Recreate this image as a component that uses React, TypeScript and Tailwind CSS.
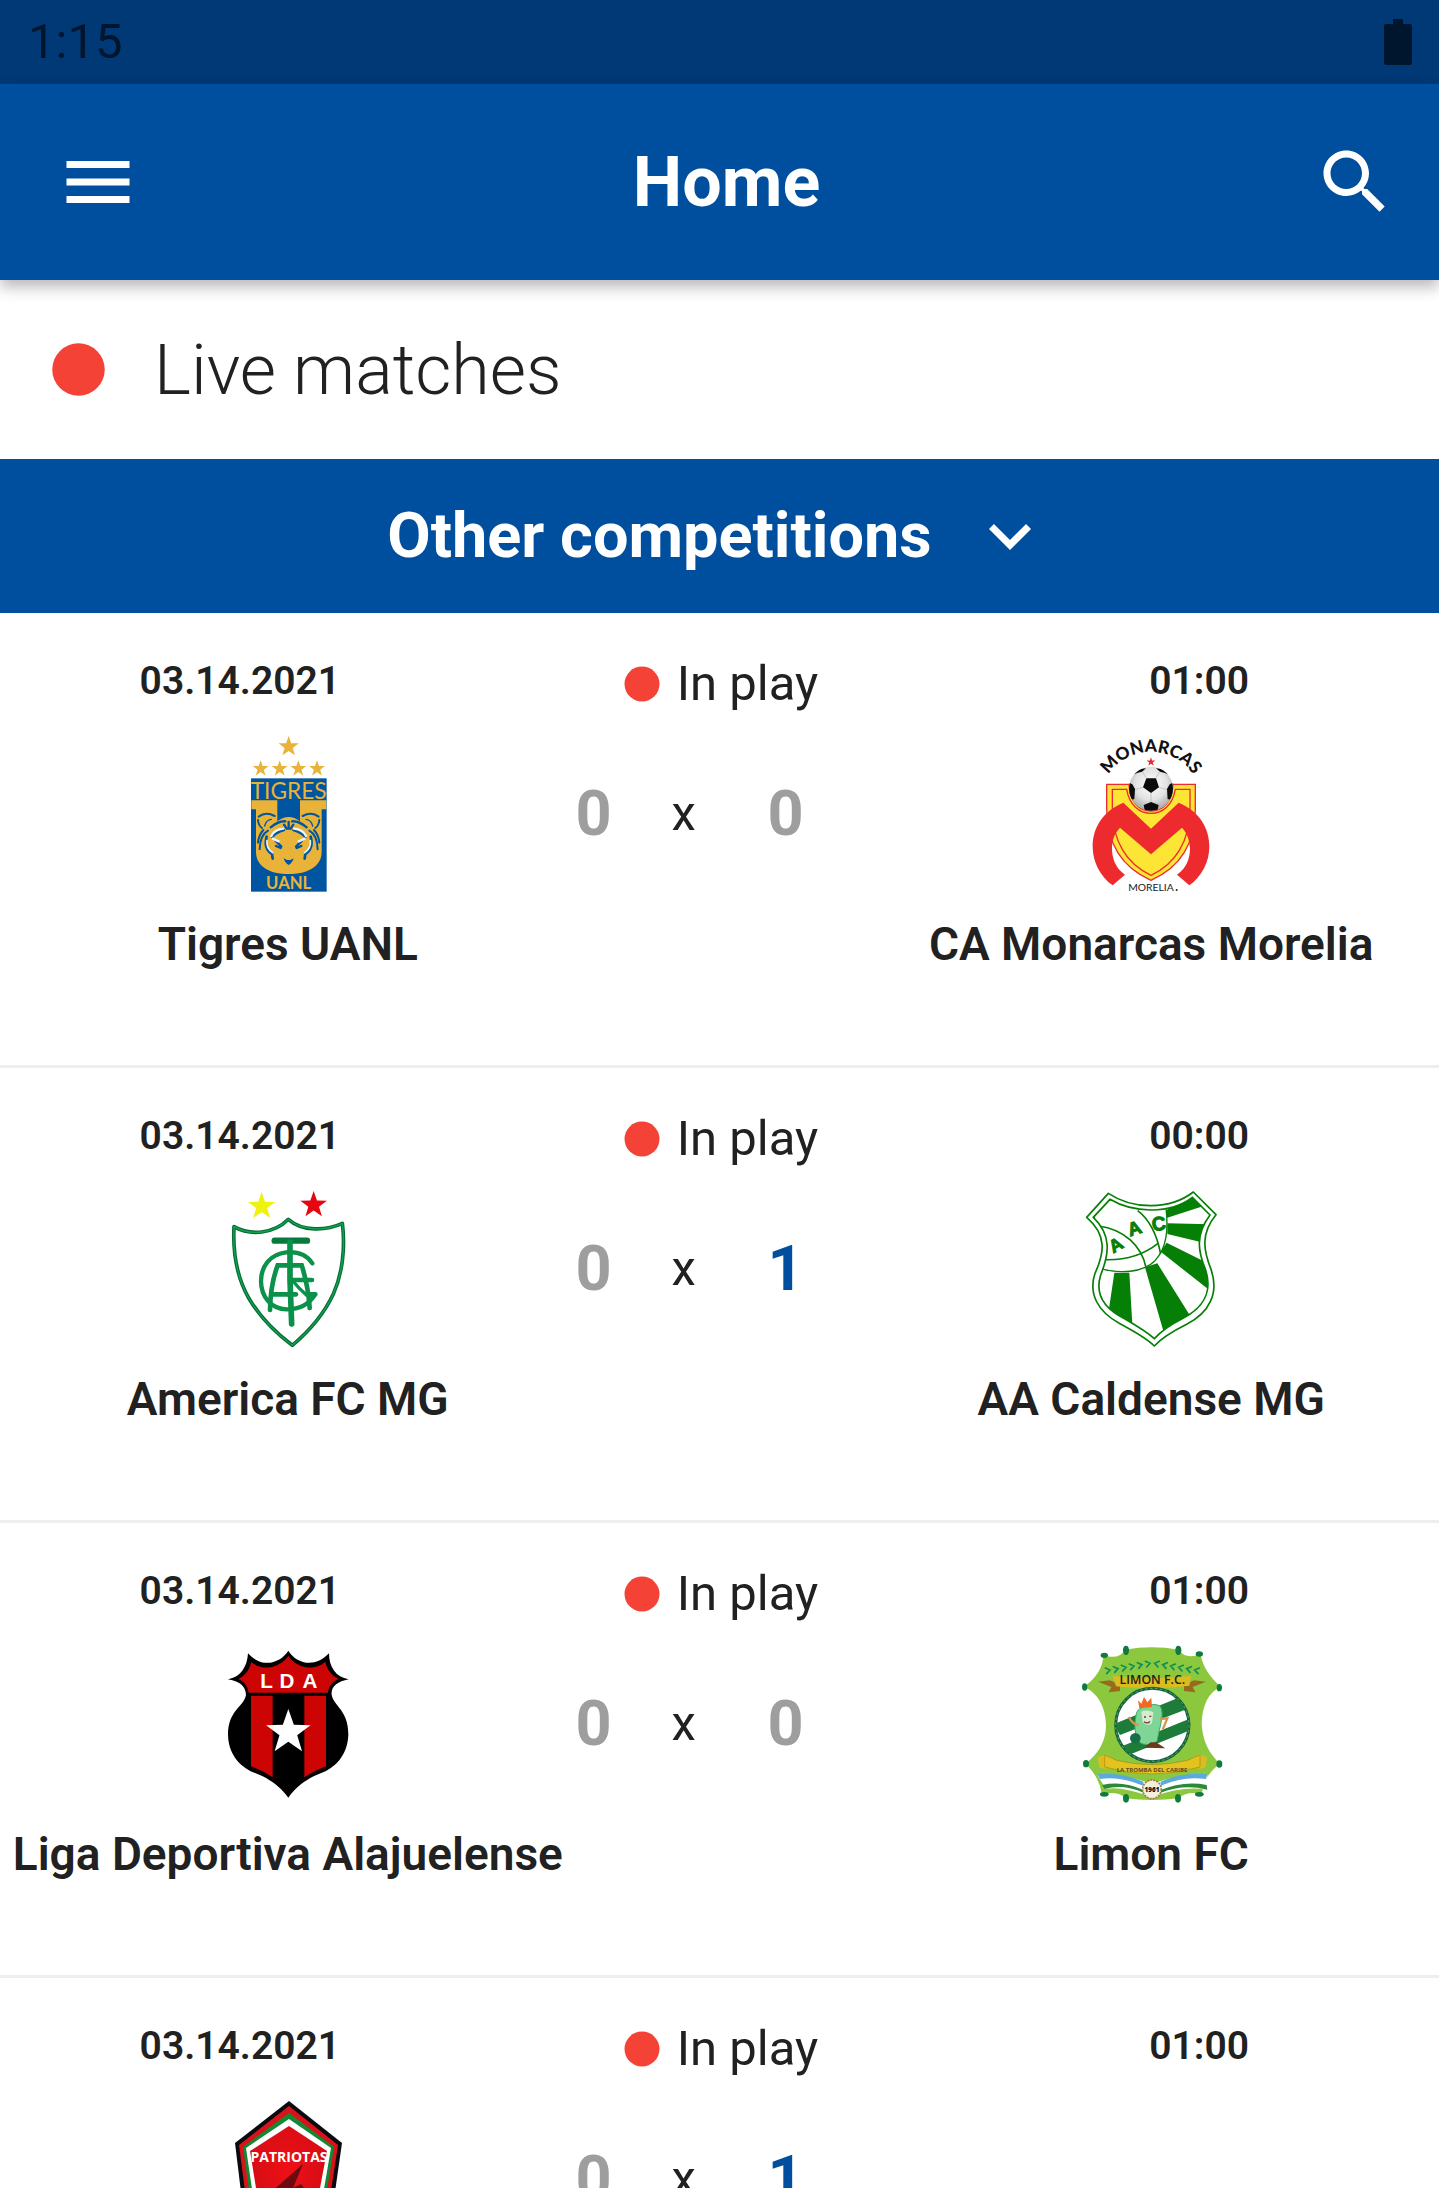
import type { ReactNode } from "react";

function starPoints(cx: number, cy: number, r: number) {
  const pts: string[] = [];
  for (let i = 0; i < 10; i++) {
    const radius = i % 2 === 0 ? r : r * 0.4;
    const a = (Math.PI / 5) * i - Math.PI / 2;
    pts.push(`${(cx + radius * Math.cos(a)).toFixed(1)},${(cy + radius * Math.sin(a)).toFixed(1)}`);
  }
  return pts.join(" ");
}

function Star({ cx, cy, r, fill }: { cx: number; cy: number; r: number; fill: string }) {
  return <polygon points={starPoints(cx, cy, r)} fill={fill} />;
}

function Crest({ viewBox, label, children }: { viewBox: string; label: string; children: ReactNode }) {
  return (
    <svg viewBox={viewBox} role="img" aria-label={label} className="size-full">
      {children}
    </svg>
  );
}

function TigresCrest() {
  const blue = "#0055a0";
  const gold = "#e8b338";
  return (
    <Crest viewBox="-65 45 474 474" label="Tigres UANL crest">
      <Star cx={174} cy={80} r={32} fill={gold} />
      {[90, 147, 203, 259].map((x) => (
        <Star key={x} cx={x} cy={146} r={25} fill={gold} />
      ))}
      <rect x="61" y="175" width="227" height="340" fill={blue} />
      <text x="174" y="236" textAnchor="middle" fontFamily="Lato, sans-serif" fontSize="68" fill={gold}>
        TIGRES
      </text>
      <path
        d="M62 241H140V304Q174 278 208 304V241H287V268H273V395C273 440 230 462 174 462S76 440 76 395V268H62Z"
        fill={gold}
      />
      <g fill="none" stroke={blue} strokeLinecap="round">
        <path d="M84 290Q105 274 132 288M82 300Q84 318 94 324M264 290Q243 274 216 288M266 300Q264 318 254 324" strokeWidth="6" />
        <path d="M122 298Q106 300 102 318M226 298Q242 300 246 318" strokeWidth="4" />
        <path d="M120 322Q145 302 164 304M228 322Q203 302 184 304M174 306V326M160 314L168 326M188 314L180 326" strokeWidth="7" />
        <path d="M112 332Q88 345 87 388M98 330Q84 345 82 368M236 332Q260 345 261 388M250 330Q264 345 266 368" strokeWidth="6" />
        <path d="M108 350Q98 385 124 402L126 416M240 350Q250 385 224 402L222 416" strokeWidth="8" />
        <path d="M124 352Q136 336 160 330M134 362L152 380M136 378L150 384M224 352Q212 336 188 330M214 362L196 380M212 378L198 384" strokeWidth="7" />
      </g>
      <g fill="none" stroke="#e8f4ff" strokeLinecap="round" strokeWidth="7">
        <path d="M122 348Q132 328 158 326M126 356L144 364M226 348Q216 328 190 326M222 356L204 364" />
        <path d="M109 362Q106 384 126 398M239 362Q242 384 222 398" strokeWidth="5" />
      </g>
      <path d="M159 415L169 420H179L189 415Q186 428 174 435Q162 428 159 415Z" fill={blue} />
      <text x="174" y="507" textAnchor="middle" fontFamily="Lato, sans-serif" fontWeight="700" fontSize="50" fill={gold}>
        UANL
      </text>
    </Crest>
  );
}

function MonarcasCrest() {
  const red = "#ed2a2e";
  return (
    <Crest viewBox="-24 30 474 474" label="CA Monarcas Morelia crest">
      <defs>
        <radialGradient id="ball" cx="0.5" cy="0.4" r="0.6">
          <stop offset="0" stopColor="#ffffff" />
          <stop offset="0.6" stopColor="#e2e2e2" />
          <stop offset="1" stopColor="#a8a8a8" />
        </radialGradient>
        <clipPath id="ballClip">
          <circle cx="213" cy="191" r="66" />
        </clipPath>
        <path id="arc" d="M62 250A152 152 0 1 1 364 250" />
      </defs>
      <text fontFamily="Lato, sans-serif" fontWeight="900" fontSize="52" fill="#111">
        <textPath href="#arc" startOffset="50%" textAnchor="middle">
          MONARCAS
        </textPath>
      </text>
      <Star cx={213} cy={111} r={14} fill={red} />
      <g stroke={red} strokeWidth="4" fill="#fde535">
        <path d="M80 178H147C150 230 175 258 213 258S276 230 279 178H346V250C346 360 295 430 213 466C131 430 80 360 80 250Z" />
        <path d="M97 193H140C148 240 178 265 213 265S278 240 286 193H330V250C330 350 285 418 213 451C141 418 97 350 97 250Z" />
      </g>
      <path
        d="M130 233L213 311L296 233C360 260 388 310 388 365C388 410 365 455 328 481L291 449C320 430 330 400 330 370C328 345 322 325 306 308L213 388L120 308C104 325 96 345 96 370C96 400 106 430 135 449L98 481C61 455 38 410 38 365C38 310 66 260 130 233Z"
        fill={red}
      />
      <circle cx="213" cy="191" r="66" fill="url(#ball)" />
      <g clipPath="url(#ballClip)" fill="#0b0b0b">
        <path d="M199 160H228L237 187L213 204L189 187Z" />
        <path d="M145 172L157 178L165 192L163 222L150 226L140 200Z" />
        <path d="M281 172L269 178L261 192L263 222L276 226L286 200Z" />
        <path d="M191 240L213 231L236 240L232 260H195Z" />
        <path d="M158 150Q172 130 198 130L186 140Q170 142 158 150ZM268 150Q254 130 228 130L240 140Q256 142 268 150Z" />
        <path d="M189 187L165 194M237 187L261 194M213 204V231M199 160L188 141M228 160L238 141" stroke="#b4b4b4" strokeWidth="2" />
      </g>
      <text x="213" y="498" textAnchor="middle" fontFamily="Lato, sans-serif" fontSize="31" fill="#222">
        MORELIA
      </text>
      <circle cx="290" cy="495" r="3" fill="#222" />
    </Crest>
  );
}

function AmericaCrest() {
  return (
    <Crest viewBox="-35 30 474 474" label="America FC MG crest">
      <Star cx={123} cy={79} r={43} fill="#eef20e" />
      <Star cx={279} cy={75} r={42} fill="#e5060f" />
      <path
        d="M40 140C88 168 160 162 203 118C245 156 318 152 365 130C374 200 366 280 338 342C310 402 260 458 215 496C172 464 118 412 84 354C50 294 36 220 40 140Z"
        fill="#fff"
        stroke="#056b35"
        strokeWidth="11"
        strokeLinejoin="round"
      />
      <path
        d="M40 140C88 168 160 162 203 118C245 156 318 152 365 130C374 200 366 280 338 342C310 402 260 458 215 496C172 464 118 412 84 354C50 294 36 220 40 140Z"
        fill="none"
        stroke="#11a552"
        strokeWidth="4"
      />
      <g fill="none" stroke="#0b9149" strokeLinecap="round">
        <path d="M162 182H259" strokeWidth="19" stroke="#087a3e" />
        <path d="M208 186V300L213 432" strokeWidth="17" />
        <path d="M275 250C258 224 230 214 196 217C150 222 121 258 121 303C121 350 152 388 198 388C238 388 266 372 283 344" strokeWidth="13" />
        <path d="M148 390C149 340 158 290 171 256H243C254 290 264 340 267 384" strokeWidth="14" />
        <path d="M156 343H226M216 300H274M262 343H284" strokeWidth="14" />
        <path d="M216 302C232 322 240 330 258 346" strokeWidth="10" />
      </g>
    </Crest>
  );
}

function CaldenseCrest() {
  const green = "#067f06";
  return (
    <Crest viewBox="6 30 474 474" label="AA Caldense MG crest">
      <defs>
        <clipPath id="aacInner">
          <path d="M120 58C190 100 300 103 367 52L420 105C375 165 384 215 407 270C428 335 400 385 335 417C295 437 270 458 253 476C230 455 205 440 165 417C100 385 75 340 92 285C118 220 125 165 70 112Z" />
        </clipPath>
      </defs>
      <path
        d="M115 40C190 90 300 90 370 36L438 104C392 160 400 210 423 268C448 340 418 398 350 433C310 453 275 474 253 498C230 474 195 455 150 431C82 395 55 340 75 280C103 220 112 165 50 112Z"
        fill="#fff"
        stroke={green}
        strokeWidth="5"
        strokeLinejoin="round"
      />
      <g clipPath="url(#aacInner)">
        <path d="M284 94L370 40L410 75L292 113ZM292 130L420 133L395 187L292 162ZM290 188L400 243L430 340L272 215ZM225 262L262 250L365 415L282 460ZM133 278L178 278L188 450L115 400Z" fill={green} />
        <path
          d="M70 60H285C298 150 290 205 255 242C220 277 150 285 80 262Z"
          fill="#fff"
          stroke={green}
          strokeWidth="4"
        />
        <path d="M85 138C165 148 215 200 228 262M203 92C240 120 262 170 272 222M100 239C170 242 220 225 264 190" fill="none" stroke={green} strokeWidth="5" />
      </g>
      <path
        d="M120 58C190 100 300 103 367 52L420 105C375 165 384 215 407 270C428 335 400 385 335 417C295 437 270 458 253 476C230 455 205 440 165 417C100 385 75 340 92 285C118 220 125 165 70 112Z"
        fill="none"
        stroke={green}
        strokeWidth="5"
      />
      <g fontFamily="Liberation Sans, sans-serif" fontWeight="700" fill={green} stroke={green} strokeWidth="3" textAnchor="middle">
        <text transform="translate(147 211) rotate(-30)" fontSize="54">A</text>
        <text transform="translate(199 163) rotate(-18)" fontSize="56">A</text>
        <text transform="translate(269 151) rotate(-8)" fontSize="58">C</text>
      </g>
    </Crest>
  );
}

function AlajuelenseCrest() {
  const red = "#cc0404";
  return (
    <Crest viewBox="-35 15 474 474" label="Liga Deportiva Alajuelense crest">
      <path
        d="M203 32C225 68 280 88 325 40C325 80 345 112 384 118C350 125 330 140 333 165C340 200 384 210 383 285C380 350 340 385 300 400C260 415 225 440 203 473C180 440 145 415 105 400C65 385 24 350 22 285C22 210 70 200 76 165C75 140 60 125 22 118C60 112 80 80 82 40C125 88 180 68 203 32Z"
        fill="#000"
      />
      <path
        d="M203 48C225 80 275 98 314 66C320 92 335 108 354 117C335 125 325 135 322 158H84C80 135 70 125 53 117C72 108 85 92 92 66C130 98 180 80 203 48Z"
        fill={red}
      />
      <path d="M91 167H156V412Q128 392 91 379ZM251 167H316V379Q280 392 251 412Z" fill={red} />
      <Star cx={203} cy={277} r={70} fill="#fff" />
      <g fontFamily="Liberation Sans, sans-serif" fontWeight="700" fontSize="62" fill="#fff" textAnchor="middle">
        <text x="138" y="143">L</text>
        <text x="199" y="143">D</text>
        <text x="268" y="143">A</text>
      </g>
    </Crest>
  );
}

function LimonCrest() {
  const dark = "#0f7a3c";
  return (
    <Crest viewBox="6 30 474 474" label="Limon FC crest">
      <defs>
        <clipPath id="limonDisc">
          <circle cx="247" cy="270" r="108" />
        </clipPath>
      </defs>
      <path
        d="M165 44Q245 30 327 44Q345 74 392 58Q400 110 452 155Q398 180 395 265Q398 340 450 386Q402 420 395 476Q350 468 325 490Q248 500 165 490Q150 468 95 476Q88 425 46 386Q108 340 108 270Q105 185 42 155Q98 115 100 62Q150 74 165 44Z"
        fill="#8cc83e"
      />
      <g fill={dark}>
        <ellipse cx="168" cy="46" rx="9" ry="14" />
        <ellipse cx="325" cy="46" rx="9" ry="14" />
        <ellipse cx="103" cy="61" rx="11" ry="8" />
        <ellipse cx="388" cy="57" rx="11" ry="8" />
        <ellipse cx="44" cy="156" rx="8" ry="11" />
        <ellipse cx="448" cy="158" rx="8" ry="11" />
        <ellipse cx="48" cy="386" rx="9" ry="11" />
        <ellipse cx="448" cy="387" rx="9" ry="11" />
        <ellipse cx="103" cy="478" rx="13" ry="7" />
        <ellipse cx="388" cy="478" rx="13" ry="7" />
        <ellipse cx="168" cy="490" rx="9" ry="13" />
        <ellipse cx="324" cy="490" rx="9" ry="13" />
      </g>
      <g fill="none" stroke="#0d8f55" strokeWidth="5" strokeLinecap="round">
        {[0, 1, 2, 3, 4, 5].map((i) => (
          <path
            key={i}
            d={`M${106 + i * 24} ${99 - i * 4}l14 6l-10 11M${388 - i * 24} ${99 - i * 4}l-14 6l10 11`}
          />
        ))}
      </g>
      <path d="M84 140L120 136L150 150V168L116 172L124 156ZM408 140L372 136L342 150V168L376 172L368 156Z" fill="#9a6a1c" />
      <path d="M128 122Q246 138 364 122L358 152Q246 166 138 154Z" fill="#d9bd20" />
      <text x="247" y="147" textAnchor="middle" fontFamily="Open Sans, sans-serif" fontWeight="600" fontSize="37" fill="#252010">
        LIMON F.C.
      </text>
      <circle cx="247" cy="270" r="110" fill="#fff" stroke="#14643a" strokeWidth="9" />
      <circle cx="247" cy="270" r="110" fill="none" stroke="#8fb59b" strokeWidth="2" strokeDasharray="8 7" />
      <g clipPath="url(#limonDisc)" fill="#1d7c3a">
        <path d="M130 268L340 182L362 218L150 300ZM150 336L362 250L366 284L176 360Z" />
      </g>
      <path d="M200 232C208 212 262 200 272 216C284 240 268 276 262 316C256 330 214 334 206 318C190 290 194 260 200 232Z" fill="#7fd596" stroke="#3da766" strokeWidth="3" />
      <path d="M214 230Q232 222 250 232L246 264Q232 276 218 262Z" fill="#d5ecd0" />
      <path d="M204 196L214 206L222 186L232 202L244 188L246 216L208 220Z" fill="#f26a21" />
      <path d="M222 246h6M238 244h6M222 260q10 8 18-1" stroke="#733" strokeWidth="4" fill="none" />
      <path d="M206 270Q188 268 176 246M270 252L292 250L278 284" stroke="#d9964a" strokeWidth="7" fill="none" />
      <circle cx="196" cy="310" r="16" fill="#176f4a" />
      <path d="M222 338L242 322H258L286 340Z" fill="#6b3a1a" />
      <path d="M82 366L110 358V402L88 398ZM412 366L384 358V402L406 398Z" fill="#d9bd20" />
      <path d="M104 360L140 376Q246 402 352 376L390 360V396Q246 438 104 396Z" fill="#e3c41f" stroke="#a98612" strokeWidth="2" />
      <text x="246" y="411" textAnchor="middle" fontFamily="Open Sans, sans-serif" fontWeight="700" fontSize="18" fill="#5c4a2b">
        LA TROMBA DEL CARIBE
      </text>
      <path d="M82 420Q150 414 246 446Q340 414 412 420V464Q340 452 246 486Q150 452 108 462Z" fill="#fff" />
      <path d="M82 418Q150 410 220 440V452Q150 422 90 432ZM412 418Q340 410 272 440V452Q340 422 408 432Z" fill="#5aa9e0" />
      <path d="M104 462Q160 446 222 474V466Q160 436 96 450ZM412 464Q340 446 270 474V466Q340 436 410 450Z" fill="#2b8a3a" />
      <circle cx="246" cy="463" r="28" fill="#f4efdb" stroke="#9c7f43" strokeWidth="5" strokeDasharray="6 3" />
      <text x="246" y="470" textAnchor="middle" fontFamily="Open Sans, sans-serif" fontWeight="800" fontSize="19" fill="#111">
        1961
      </text>
    </Crest>
  );
}

function PatriotasCrest() {
  return (
    <Crest viewBox="0 0 158 158" label="Patriotas crest">
      <defs>
        <radialGradient id="patriotas" cx="0.5" cy="0.4" r="0.7">
          <stop offset="0" stopColor="#ee1016" />
          <stop offset="0.7" stopColor="#d60d14" />
          <stop offset="1" stopColor="#8c0a0e" />
        </radialGradient>
      </defs>
      <path d="M80 1L133 43L126 92Q116 132 80 157Q42 132 32 92L26 43Z" fill="#0a0a10" />
      <path d="M80 6L129 45L122 91Q112 128 80 151Q46 128 36 91L30 45Z" fill="#d8131a" />
      <path d="M80 13L125 47L118 90Q110 124 80 145Q50 124 40 90L34 47Z" fill="#128a33" />
      <path d="M80 19L122 48L115 89Q107 120 80 140Q53 120 43 89L37 48Z" fill="#fff" />
      <path d="M80 26L118 51L111 88Q104 116 80 134Q56 116 47 88L41 51Z" fill="url(#patriotas)" />
      <path d="M94 64L84 88L92 84L98 92L70 110L62 92Z" fill="#6d0a10" />
      <text x="80" y="62" textAnchor="middle" fontFamily="Open Sans, sans-serif" fontWeight="700" fontSize="14" fill="#fff">
        PATRIOTAS
      </text>
    </Crest>
  );
}

interface Match {
  date: string;
  time: string;
  homeGoals: number;
  awayGoals: number;
  home: { name?: string; crest?: ReactNode };
  away: { name?: string; crest?: ReactNode };
}

const matches: Match[] = [
  {
    date: "03.14.2021",
    time: "01:00",
    homeGoals: 0,
    awayGoals: 0,
    home: { name: "Tigres UANL", crest: <TigresCrest /> },
    away: { name: "CA Monarcas Morelia", crest: <MonarcasCrest /> },
  },
  {
    date: "03.14.2021",
    time: "00:00",
    homeGoals: 0,
    awayGoals: 1,
    home: { name: "America FC MG", crest: <AmericaCrest /> },
    away: { name: "AA Caldense MG", crest: <CaldenseCrest /> },
  },
  {
    date: "03.14.2021",
    time: "01:00",
    homeGoals: 0,
    awayGoals: 0,
    home: { name: "Liga Deportiva Alajuelense", crest: <AlajuelenseCrest /> },
    away: { name: "Limon FC", crest: <LimonCrest /> },
  },
  {
    date: "03.14.2021",
    time: "01:00",
    homeGoals: 0,
    awayGoals: 1,
    home: { crest: <PatriotasCrest /> },
    away: {},
  },
];

function Dot({ className }: { className: string }) {
  return (
    <svg viewBox="0 0 24 24" aria-hidden="true" className={className}>
      <circle cx="12" cy="12" r="10" fill="#f44336" />
    </svg>
  );
}

function Goals({ value }: { value: number }) {
  return (
    <span className={value > 0 ? "text-[63px] font-bold text-[#004e9e]" : "text-[63px] font-bold text-[#9e9e9e]"}>
      {value}
    </span>
  );
}

function Team({ team }: { team: Match["home"] }) {
  return (
    <div className="col-span-2 flex flex-col items-center gap-6">
      <div className="size-[158px]">{team.crest}</div>
      <p className="h-[54px] text-[46px] leading-[54px] font-semibold whitespace-nowrap">{team.name}</p>
    </div>
  );
}

function MatchRow({ match }: { match: Match }) {
  return (
    <li className="border-b-3 border-[#eeeeee] pt-[42px] pb-[94px]">
      <div className="grid grid-cols-3 items-start justify-items-center">
        <span className="text-[39px] leading-[52px] font-semibold">{match.date}</span>
        <span className="flex items-center gap-3.5 text-[49px] leading-[57px]">
          <Dot className="size-[42px]" />
          In play
        </span>
        <span className="text-[39px] leading-[52px] font-semibold">{match.time}</span>
      </div>
      <div className="mt-[23px] grid grid-cols-5">
        <Team team={match.home} />
        <div className="grid h-[158px] grid-cols-3 items-center">
          <Goals value={match.homeGoals} />
          <span className="text-[49px]">x</span>
          <Goals value={match.awayGoals} />
        </div>
        <Team team={match.away} />
      </div>
    </li>
  );
}

export default function App() {
  return (
    <div className="flex h-screen flex-col overflow-hidden bg-white font-['Roboto',sans-serif] text-[#212121]">
      <div className="flex h-[84px] shrink-0 items-center justify-between bg-[#003976] pr-[27px] pl-7 text-[#00162e]">
        <span className="text-[49px]">1:15</span>
        <svg viewBox="0 0 28 46" aria-label="Battery" className="h-[46px] w-7">
          <path
            d="M9 0H19V5H26Q28 5 28 7V44Q28 46 26 46H2Q0 46 0 44V7Q0 5 2 5H9Z"
            fill="currentColor"
          />
        </svg>
      </div>
      <header className="z-10 grid h-[196px] shrink-0 grid-cols-3 items-center bg-[#004e9e] pr-[42px] pl-14 text-white shadow-[0_7px_14px_rgba(0,0,0,0.28)]">
        <button type="button" aria-label="Menu" className="size-[84px]">
          <svg viewBox="0 0 24 24" className="size-full" fill="currentColor">
            <path d="M3 18h18v-2H3v2zm0-5h18v-2H3v2zm0-7v2h18V6H3z" />
          </svg>
        </button>
        <h1 className="text-center text-[70px] leading-[82px] font-bold">Home</h1>
        <button type="button" aria-label="Search" className="size-[84px] justify-self-end">
          <svg viewBox="0 0 24 24" className="size-full" fill="currentColor">
            <path d="M15.5 14h-.79l-.28-.27C15.41 12.59 16 11.11 16 9.5 16 5.91 13.09 3 9.5 3S3 5.91 3 9.5 5.91 16 9.5 16c1.61 0 3.09-.59 4.23-1.57l.27.28v.79l5 4.99L20.49 19l-4.99-5zm-6 0C7.01 14 5 11.99 5 9.5S7.01 5 9.5 5 14 7.01 14 9.5 11.99 14 9.5 14z" />
          </svg>
        </button>
      </header>
      <main className="min-h-0 flex-1 overflow-y-auto [scrollbar-width:none]">
        <div className="flex h-[179px] items-center gap-11 px-[47px]">
          <Dot className="size-[63px]" />
          <h2 className="text-[70px] leading-[82px] font-light">Live matches</h2>
        </div>
        <button
          type="button"
          aria-expanded="true"
          className="flex h-[154px] w-full items-center justify-center gap-9 bg-[#004e9e] text-[63px] font-bold text-white"
        >
          Other competitions
          <svg viewBox="0 0 24 24" aria-hidden="true" className="size-[84px]" fill="currentColor">
            <path d="M16.59 8.59L12 13.17 7.41 8.59 6 10l6 6 6-6z" />
          </svg>
        </button>
        <ul>
          {matches.map((match, i) => (
            <MatchRow key={i} match={match} />
          ))}
        </ul>
      </main>
    </div>
  );
}
